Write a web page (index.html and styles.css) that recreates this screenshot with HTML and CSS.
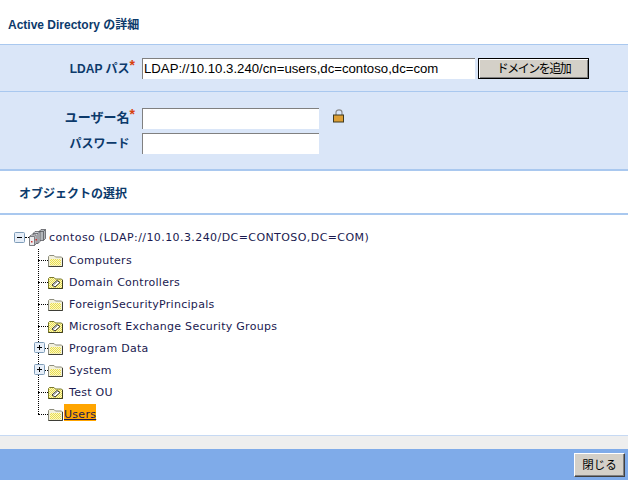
FILE: index.html
```html
<!DOCTYPE html>
<html lang="ja">
<head>
<meta charset="utf-8">
<title>Active Directory の詳細</title>
<link rel="stylesheet" href="styles.css">
</head>
<body>
<svg class="defs" width="0" height="0" aria-hidden="true">
  <defs>
    <pattern id="dither" width="2" height="2" patternUnits="userSpaceOnUse">
      <rect width="2" height="2" fill="#fbf8c0"/>
      <rect width="1" height="1" fill="#e9dc50"/>
      <rect x="1" y="1" width="1" height="1" fill="#e9dc50"/>
    </pattern>
  </defs>
  <symbol id="folder" viewBox="0 0 15 13">
    <path d="M0.5 12.5V2.5L1.5 1.5H6L7.5 3H13.5L14.5 4V12.5Z" fill="#f2f0dc" stroke="#8c8c7c"/>
    <rect x="2" y="5" width="11" height="6.5" fill="url(#dither)"/>
    <path d="M0.5 12.5H14.5V4" fill="none" stroke="#3e3e36"/>
  </symbol>
  <symbol id="ou" viewBox="0 0 15 13">
    <path d="M0.5 12.5V2.5L1.5 1.5H6L7.5 3H13.5L14.5 4V12.5Z" fill="url(#dither)" stroke="#77772c"/>
    <path d="M0.5 12.5H14.5V4" fill="none" stroke="#3e3e20"/>
    <path d="M4 9L9 4.5L12 6.5L7 11Z" fill="#fff" stroke="#333"/>
    <path d="M5.5 9L9.5 5.5" stroke="#888"/>
  </symbol>
  <symbol id="domain" viewBox="0 0 17 17">
    <path d="M10 2.5L12 .5H16.5V9.5L14.5 11.5H10Z" fill="#b4b8bc" stroke="#4a4c52" stroke-width=".7"/>
    <path d="M10 2.5H14.5V11.5M14.5 2.5L16.5 .5" fill="none" stroke="#4a4c52" stroke-width=".7"/>
    <path d="M4 4.5L6 2.5H11V12.5L9 14.5H4Z" fill="#d0d2d6" stroke="#4a4c52" stroke-width=".7"/>
    <path d="M4 4.5H9V14.5M9 4.5L11 2.5" fill="none" stroke="#4a4c52" stroke-width=".7"/>
    <path d="M.5 7.5L2 6H7V15L5.5 16.5H.5Z" fill="#ececee" stroke="#4a4c52" stroke-width=".7"/>
    <path d="M.5 7.5H5.5V16.5" fill="none" stroke="#4a4c52" stroke-width=".7"/>
    <rect x="2" y="12" width="1.5" height="1.5" fill="#d03030"/>
    <rect x="6.5" y="10" width="1.5" height="1.5" fill="#d03030"/>
  </symbol>
  <symbol id="plus" viewBox="0 0 11 11">
    <rect x=".5" y=".5" width="10" height="10" rx="1" fill="#e6eef8" stroke="#7f9db9"/>
    <path d="M3 5.5H8M5.5 3V8" stroke="#000"/>
  </symbol>
  <symbol id="minus" viewBox="0 0 11 11">
    <rect x=".5" y=".5" width="10" height="10" rx="1" fill="#e6eef8" stroke="#7f9db9"/>
    <path d="M3 5.5H8" stroke="#000"/>
  </symbol>
</svg>

<main class="page">
  <h1 class="title">Active Directory の詳細</h1>

  <section class="band band-path">
    <label class="label">LDAP パス<span class="req">*</span></label>
    <input class="field field-wide" type="text" value="LDAP://10.10.3.240/cn=users,dc=contoso,dc=com">
    <button class="btn btn-default" type="button">ドメインを追加</button>
  </section>

  <section class="band band-cred">
    <div class="row">
      <label class="label label-user">ユーザー名<span class="req">*</span></label>
      <input class="field field-short" type="text">
      <svg class="lock" width="12" height="14" viewBox="0 0 12 14" aria-hidden="true">
        <path d="M3 6.5V3.5C3 0 9 0 9 3.5V6.5" fill="none" stroke="#8a8a8a" stroke-width="1.2"/>
        <rect x=".5" y="6" width="10" height="7" fill="#dd9f35" stroke="#3f3a20"/>
      </svg>
    </div>
    <div class="row">
      <label class="label">パスワード<span class="req req-blank">*</span></label>
      <input class="field field-short" type="password">
    </div>
  </section>

  <h2 class="subtitle">オブジェクトの選択</h2>

  <section class="tree">
    <div class="node node-root">
      <svg class="toggle-root" width="11" height="11"><use href="#minus"/></svg>
      <span class="conn conn-root"></span>
      <svg class="ic-domain" width="17" height="17"><use href="#domain"/></svg>
      <span class="text text-root">contoso (LDAP://10.10.3.240/DC=CONTOSO,DC=COM)</span>
    </div>
    <div class="children">
      <div class="node"><span class="conn"></span><svg class="ic" width="15" height="13"><use href="#folder"/></svg><span class="text">Computers</span></div>
      <div class="node"><span class="conn"></span><svg class="ic" width="15" height="13"><use href="#ou"/></svg><span class="text">Domain Controllers</span></div>
      <div class="node"><span class="conn"></span><svg class="ic" width="15" height="13"><use href="#folder"/></svg><span class="text">ForeignSecurityPrincipals</span></div>
      <div class="node"><span class="conn"></span><svg class="ic" width="15" height="13"><use href="#ou"/></svg><span class="text">Microsoft Exchange Security Groups</span></div>
      <div class="node"><svg class="toggle" width="11" height="11"><use href="#plus"/></svg><span class="conn"></span><svg class="ic" width="15" height="13"><use href="#folder"/></svg><span class="text">Program Data</span></div>
      <div class="node"><svg class="toggle" width="11" height="11"><use href="#plus"/></svg><span class="conn"></span><svg class="ic" width="15" height="13"><use href="#folder"/></svg><span class="text">System</span></div>
      <div class="node"><span class="conn"></span><svg class="ic" width="15" height="13"><use href="#ou"/></svg><span class="text">Test OU</span></div>
      <div class="node"><span class="conn"></span><svg class="ic" width="15" height="13"><use href="#folder"/></svg><span class="text text-selected">Users</span></div>
    </div>
  </section>

  <div class="strip"></div>
  <footer class="footer">
    <button class="btn btn-close" type="button">閉じる</button>
  </footer>
</main>
</body>
</html>
```
FILE: styles.css
```css
* { box-sizing: border-box; }
html, body { margin: 0; padding: 0; background: #fff; }
.defs { position: absolute; }
.page {
  width: 628px;
  height: 480px;
  overflow: hidden;
  display: flex;
  flex-direction: column;
  font-family: "Liberation Sans", "Noto Sans CJK JP", sans-serif;
}
.title {
  margin: 0;
  height: 45px;
  padding: 17px 0 0 8px;
  font-size: 12px;
  line-height: 16px;
  font-weight: bold;
  color: #0c3a6b;
  border-bottom: 1px solid #a9c8ef;
}
.band { background: #dae6f8; }
.band-path {
  height: 47px;
  padding-top: 13px;
  display: flex;
  align-items: flex-start;
  border-bottom: 1px solid #a9c8ef;
}
.band-cred {
  height: 79px;
  padding-top: 16px;
  display: flex;
  flex-direction: column;
  gap: 4px;
  border-bottom: 2px solid #a9c8ef;
}
.row { display: flex; align-items: flex-start; }
.label {
  width: 142px;
  padding-right: 7px;
  height: 21px;
  line-height: 21px;
  text-align: right;
  font-size: 12px;
  font-weight: bold;
  color: #0c3a6b;
  white-space: nowrap;
}
.label-user { font-size: 13px; line-height: 19px; }
.req { color: #d8400f; font-size: 14px; position: relative; top: -3px; }
.req-blank { visibility: hidden; }
.field {
  height: 21px;
  padding: 0 1px 2px;
  border: 0;
  border-top: 1px solid #808080;
  border-left: 1px solid #808080;
  background: #fff;
  font-family: "Liberation Sans", sans-serif;
  font-size: 13.2px;
  color: #000;
  outline: none;
  border-radius: 0;
}
.field-wide { width: 333px; }
.field-short { width: 177px; }
.lock { margin: 1px 0 0 14px; }
.btn {
  padding: 0 0 2px;
  background: #d4d0c8;
  font-family: "Noto Sans CJK JP", sans-serif;
  color: #000;
  border-radius: 0;
}
.btn-default {
  width: 111px;
  height: 21px;
  margin-left: 3px;
  font-size: 12px;
  letter-spacing: -1.5px;
  line-height: 17px;
  border: 1px solid #000;
  box-shadow: inset 1px 1px 0 #fff, inset -1px -1px 0 #808080;
}
.btn-close {
  width: 51px;
  height: 24px;
  font-size: 11.5px;
  line-height: 20px;
  border: 1px solid;
  border-color: #fff #404040 #404040 #fff;
  box-shadow: inset -1px -1px 0 #808080;
}
.subtitle {
  margin: 0;
  height: 44px;
  padding: 15px 0 0 19px;
  font-size: 12px;
  line-height: 16px;
  font-weight: bold;
  color: #0c3a6b;
  border-bottom: 2px solid #a9c8ef;
}
.tree {
  height: 220px;
  padding-top: 11px;
  font-family: "DejaVu Sans", sans-serif;
  font-size: 11px;
  letter-spacing: .28px;
  color: #1a1a50;
}
.node {
  height: 22px;
  display: flex;
  align-items: center;
  position: relative;
  white-space: nowrap;
}
.node-root { height: 23px; padding-left: 14px; }
.toggle-root { flex: none; }
.conn { flex: none; width: 10px; border-top: 1px dotted #000; }
.conn-root { width: 4px; }
.ic-domain { flex: none; }
.children { position: relative; padding-left: 38px; }
.children::before {
  content: "";
  position: absolute;
  left: 38px;
  top: 0;
  bottom: 11px;
  border-left: 1px dotted #000;
}
.ic { flex: none; }
.text { margin-left: 6px; }
.text-root { margin-left: 3px; letter-spacing: .42px; }
.toggle { position: absolute; left: -4px; top: 5px; z-index: 1; }
.text-selected {
  margin-left: 1px;
  margin-top: -3px;
  padding-top: 3px;
  height: 17px;
  line-height: 16px;
  background: #ffa500;
  text-decoration: underline;
  width: 32px;
}
.strip {
  height: 14px;
  background: #eeeeee;
  border-top: 1px solid #c6d9f3;
}
.footer {
  flex: 1;
  background: #7fabe9;
  display: flex;
  justify-content: flex-end;
  align-items: flex-start;
  padding: 4px 3px 0 0;
}
```
